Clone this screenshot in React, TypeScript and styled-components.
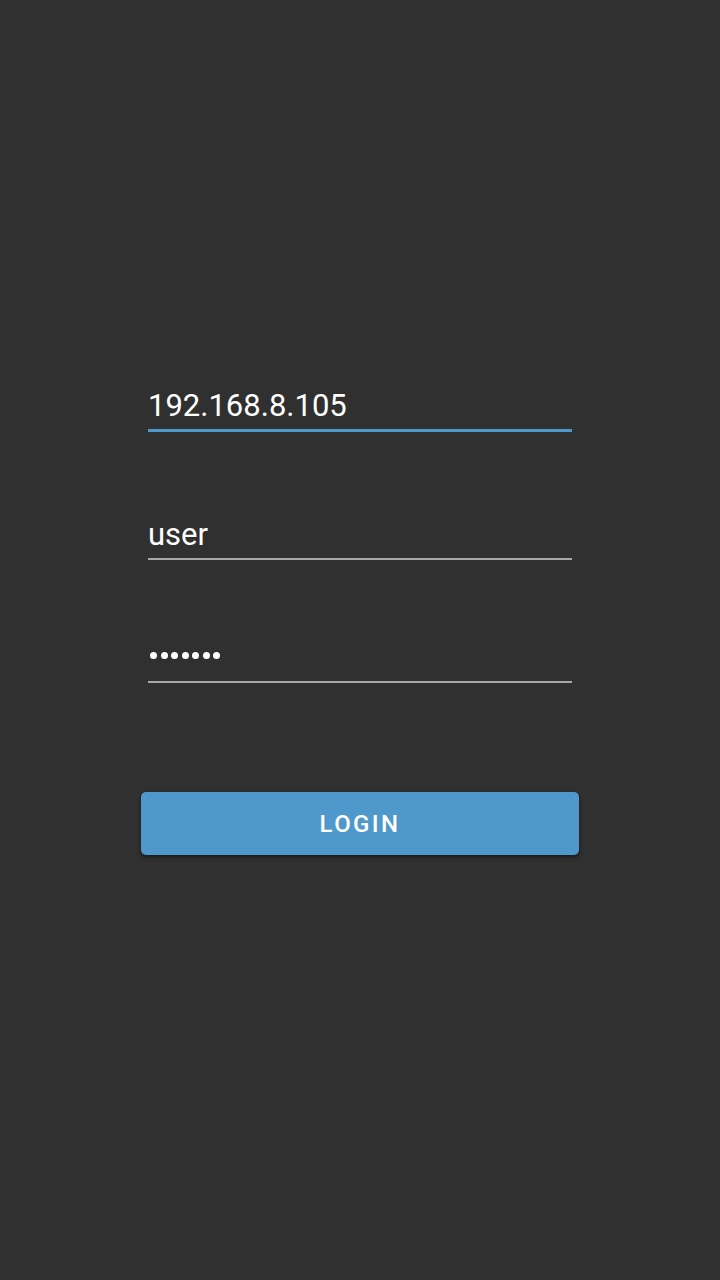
import React from 'react';
import styled, { createGlobalStyle } from 'styled-components';

const GlobalStyle = createGlobalStyle`
  html, body {
    margin: 0;
    padding: 0;
    background: #303030;
  }
  body {
    font-family: Roboto, "Noto Sans", sans-serif;
  }
`;

const Screen = styled.div`
  min-height: 1280px;
  background: #303030;
  display: flex;
  flex-direction: column;
  align-items: center;
  padding-top: 388px;
  box-sizing: border-box;
`;

const Form = styled.div`
  width: 424px;
  display: flex;
  flex-direction: column;
`;

const Field = styled.div<{ $focused?: boolean; $gap: number }>`
  margin-top: ${(p) => p.$gap}px;
  height: 41px;
  box-sizing: content-box;
  display: flex;
  align-items: flex-end;
  border-bottom: ${(p) => (p.$focused ? '3px solid #4f98cb' : '2px solid #a8a8a8')};
`;

const Value = styled.div`
  color: #ffffff;
  font-size: 31px;
  line-height: 36px;
  padding-bottom: 5px;
  padding-left: 0;
  white-space: nowrap;
`;

const Dots = styled.div`
  display: flex;
  gap: 3.5px;
  padding-left: 2px;
  padding-bottom: 22px;
`;

const Dot = styled.span`
  width: 7px;
  height: 7px;
  border-radius: 50%;
  background: #ffffff;
`;

const LoginButton = styled.button`
  margin-top: 109px;
  width: 438px;
  height: 63px;
  border: none;
  border-radius: 5px;
  background: #4f98cb;
  color: #ffffff;
  font-family: Roboto, "Noto Sans", sans-serif;
  font-weight: 500;
  font-size: 24px;
  letter-spacing: 2.4px;
  box-shadow: 0 2px 4px rgba(0, 0, 0, 0.5);
  cursor: pointer;
`;

const App: React.FC = () => {
  return (
    <>
      <GlobalStyle />
      <Screen>
        <Form>
          <Field $focused $gap={0}>
            <Value>192.168.8.105</Value>
          </Field>
          <Field $gap={85}>
            <Value>user</Value>
          </Field>
          <Field $gap={80}>
            <Dots>
              {Array.from({ length: 7 }).map((_, i) => (
                <Dot key={i} />
              ))}
            </Dots>
          </Field>
        </Form>
        <LoginButton>LOGIN</LoginButton>
      </Screen>
    </>
  );
};

export default App;
